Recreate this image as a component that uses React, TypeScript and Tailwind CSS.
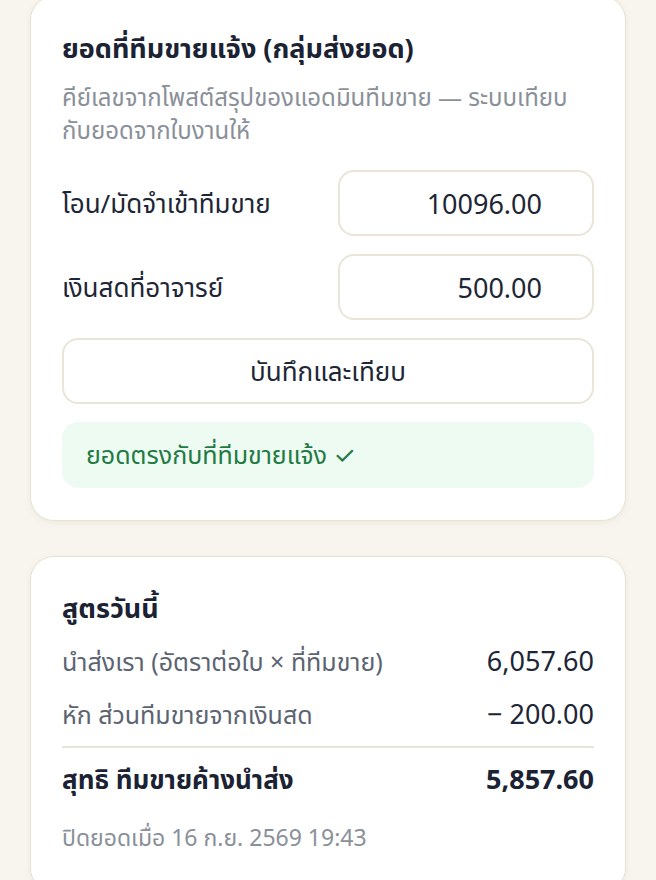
const font = { fontFamily: '"Noto Sans", "Noto Sans Thai", Inter, sans-serif' }

function AmountInput({ label, value }: { label: string; value: string }) {
  return (
    <div className="flex items-center justify-between">
      <span className="text-[26px] leading-9 text-[#1d2636]">{label}</span>
      <input
        readOnly
        value={value}
        className="h-[66px] w-[256px] rounded-[16px] border-2 border-[#ebe5d8] bg-white pr-[50px] text-right text-[27px] text-[#1d2636] outline-none"
      />
    </div>
  )
}

function Line({ label, value, bold }: { label: string; value: string; bold?: boolean }) {
  return (
    <div className="flex items-center justify-between leading-8">
      <span className={bold ? 'text-[26px] font-bold text-[#1a2233]' : 'text-[25px] text-[#5c6472]'}>{label}</span>
      <span className={bold ? 'text-[27px] font-bold text-[#1a2233]' : 'text-[27px] text-[#1d2636]'}>{value}</span>
    </div>
  )
}

export default function App() {
  return (
    <div className="min-h-screen bg-[#f8f5ef] px-[30px] pb-10" style={font}>
      <div className="-mt-[4px] rounded-[24px] border border-[#e9e3d6] bg-white px-[31px] pt-[31px] pb-[32px] shadow-[0_2px_6px_rgba(120,100,60,0.08)]">
        <h2 className="text-[27px] font-bold leading-10 text-[#1a2233]">ยอดที่ทีมขายแจ้ง (กลุ่มส่งยอด)</h2>
        <p className="mt-3 text-[24px] leading-[33px] text-[#8a9099]">
          คีย์เลขจากโพสต์สรุปของแอดมินทีมขาย — ระบบเทียบ
          <br />
          กับยอดจากใบงานให้
        </p>
        <div className="mt-6 flex flex-col gap-[18px]">
          <AmountInput label="โอน/มัดจำเข้าทีมขาย" value="10096.00" />
          <AmountInput label="เงินสดที่อาจารย์" value="500.00" />
          <button className="h-[66px] w-full rounded-[16px] border-2 border-[#ebe5d8] bg-white text-[26px] text-[#1d2636]">
            บันทึกและเทียบ
          </button>
          <div className="flex h-[66px] items-center rounded-[16px] bg-[#eefbf2] px-6 text-[25px] text-[#217a43]">
            ยอดตรงกับที่ทีมขายแจ้ง ✓
          </div>
        </div>
      </div>

      <div className="mt-[35px] rounded-[24px] border border-[#e9e3d6] bg-white px-[31px] pt-[31px] pb-[40px] shadow-[0_2px_6px_rgba(120,100,60,0.08)]">
        <h2 className="text-[27px] font-bold leading-10 text-[#1a2233]">สูตรวันนี้</h2>
        <div className="mt-[17px] flex flex-col gap-[21px]">
          <Line label="นำส่งเรา (อัตราต่อใบ × ที่ทีมขาย)" value="6,057.60" />
          <Line label="หัก ส่วนทีมขายจากเงินสด" value="− 200.00" />
        </div>
        <div className="mt-4 border-t-2 border-[#e9e4da] pt-[15px]">
          <Line label="สุทธิ ทีมขายค้างนำส่ง" value="5,857.60" bold />
        </div>
        <p className="mt-7 text-[23px] leading-7 text-[#8a9099]">ปิดยอดเมื่อ 16 ก.ย. 2569 19:43</p>
      </div>
    </div>
  )
}
